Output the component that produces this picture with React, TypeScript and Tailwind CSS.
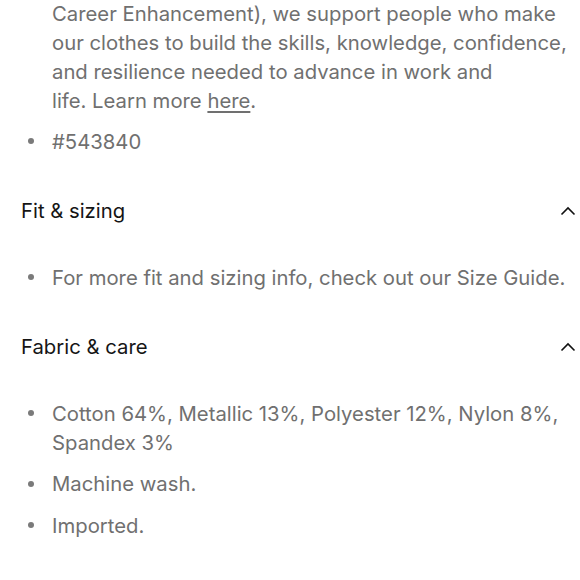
const sections = [
  {
    title: "Fit & sizing",
    items: ["For more fit and sizing info, check out our Size Guide."],
  },
  {
    title: "Fabric & care",
    items: [
      "Cotton 64%, Metallic 13%, Polyester 12%, Nylon 8%, Spandex 3%",
      "Machine wash.",
      "Imported.",
    ],
  },
];

function Bullet({ children }: { children: React.ReactNode }) {
  return (
    <li className="flex">
      <span className="flex h-[29px] w-[52px] shrink-0 items-center pl-[28px]">
        <span className="h-[6px] w-[6px] rounded-full bg-[#7a7a7a]" />
      </span>
      <span>{children}</span>
    </li>
  );
}

function Chevron() {
  return (
    <svg width="16" height="10" viewBox="0 0 16 10" fill="none" className="text-[#111]">
      <path d="M1.5 8.5L8 2l6.5 6.5" stroke="currentColor" strokeWidth="1.6" />
    </svg>
  );
}

export default function App() {
  return (
    <div className="h-[580px] w-[580px] overflow-hidden bg-white font-['Inter',sans-serif] text-[20.3px] leading-[29px] text-[#707070]">
      <div className="-mt-[1.5px] pr-[4px]">
        <div className="pl-[52px]">
          Career Enhancement), we support people who make our clothes to build the skills, knowledge, confidence, and resilience needed to advance in work and
          <br />
          life. Learn more{" "}
          <a href="#" className="underline underline-offset-[3px]">here</a>.
        </div>
        <ul className="mt-[12px] space-y-[12px]">
          <Bullet>#543840</Bullet>
        </ul>
      </div>

      {sections.map((s) => (
        <section key={s.title}>
          <div className="flex items-center justify-between pt-[41px] pb-[38px] pl-[21px] pr-[4px] leading-[28px] text-[#151515]">
            <span>{s.title}</span>
            <Chevron />
          </div>
          <ul className="space-y-[12.5px] pr-[4px]">
            {s.items.map((it) => (
              <Bullet key={it}>{it}</Bullet>
            ))}
          </ul>
        </section>
      ))}
    </div>
  );
}
